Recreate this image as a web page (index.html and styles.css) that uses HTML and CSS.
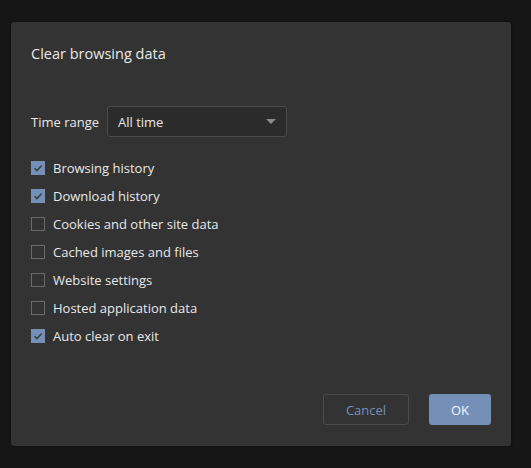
FILE: index.html
```html
<!DOCTYPE html>
<html>
<head>
<meta charset="utf-8">
<link rel="stylesheet" href="styles.css">
</head>
<body>
<div class="dialog">
  <div class="title">Clear browsing data</div>
  <div class="range-row">
    <span class="label">Time range</span>
    <div class="select">
      <span>All time</span>
      <span class="caret"></span>
    </div>
  </div>
  <div class="options">
    <label class="opt"><span class="box checked"><svg viewBox="0 0 14 14" width="14" height="14"><path d="M3.5 7.2 L6 9.6 L10.6 4.6" fill="none" stroke="#3c3c3c" stroke-width="1.5"/></svg></span>Browsing history</label>
    <label class="opt"><span class="box checked"><svg viewBox="0 0 14 14" width="14" height="14"><path d="M3.5 7.2 L6 9.6 L10.6 4.6" fill="none" stroke="#3c3c3c" stroke-width="1.5"/></svg></span>Download history</label>
    <label class="opt"><span class="box"></span>Cookies and other site data</label>
    <label class="opt"><span class="box"></span>Cached images and files</label>
    <label class="opt"><span class="box"></span>Website settings</label>
    <label class="opt"><span class="box"></span>Hosted application data</label>
    <label class="opt"><span class="box checked"><svg viewBox="0 0 14 14" width="14" height="14"><path d="M3.5 7.2 L6 9.6 L10.6 4.6" fill="none" stroke="#3c3c3c" stroke-width="1.5"/></svg></span>Auto clear on exit</label>
  </div>
  <div class="buttons">
    <button class="btn cancel">Cancel</button>
    <button class="btn ok">OK</button>
  </div>
</div>
</body>
</html>
```
FILE: styles.css
```css
html, body {
  margin: 0;
  padding: 0;
  background: #161616;
  height: 100%;
}
body {
  font-family: "Open Sans", "Noto Sans", sans-serif;
  color: #e8e8e8;
  padding: 22px 0 0 11px;
  box-sizing: border-box;
}
.dialog {
  width: 500px;
  height: 424px;
  box-sizing: border-box;
  background: #333333;
  border-radius: 3px;
  box-shadow: 0 0 3px rgba(0,0,0,0.5);
  padding: 22px 20px 21px 20px;
  display: flex;
  flex-direction: column;
}
.title {
  font-size: 14.5px;
  line-height: 20px;
  height: 20px;
}
.range-row {
  display: flex;
  align-items: center;
  margin-top: 42px;
  height: 31px;
}
.label {
  font-size: 13px;
  width: 76px;
}
.select {
  width: 180px;
  height: 31px;
  box-sizing: border-box;
  background: #2b2b2b;
  border: 1px solid #4b4b4b;
  border-radius: 3px;
  display: flex;
  align-items: center;
  justify-content: space-between;
  padding: 0 10px 0 10px;
  font-size: 13px;
}
.caret {
  width: 0;
  height: 0;
  border-left: 5px solid transparent;
  border-right: 5px solid transparent;
  border-top: 5px solid #8a8a8a;
}
.options {
  margin-top: 17px;
  display: flex;
  flex-direction: column;
}
.opt {
  height: 28px;
  display: flex;
  align-items: center;
  font-size: 13px;
}
.box {
  width: 14px;
  height: 14px;
  box-sizing: border-box;
  border: 1px solid #6b6b6b;
  margin-right: 8px;
  display: flex;
}
.box.checked {
  background: #7590b8;
  border-color: #7590b8;
}
.box svg {
  margin: -1px;
}
.buttons {
  margin-top: auto;
  display: flex;
  justify-content: flex-end;
  gap: 20px;
}
.btn {
  height: 31px;
  border-radius: 3px;
  font-family: "Open Sans", "Noto Sans", sans-serif;
  font-size: 13px;
  padding: 0;
}
.cancel {
  width: 86px;
  background: transparent;
  border: 1px solid #4b4b4b;
  color: #7290bb;
}
.ok {
  width: 62px;
  background: #7490b9;
  border: none;
  color: #f4f6fa;
}
```
